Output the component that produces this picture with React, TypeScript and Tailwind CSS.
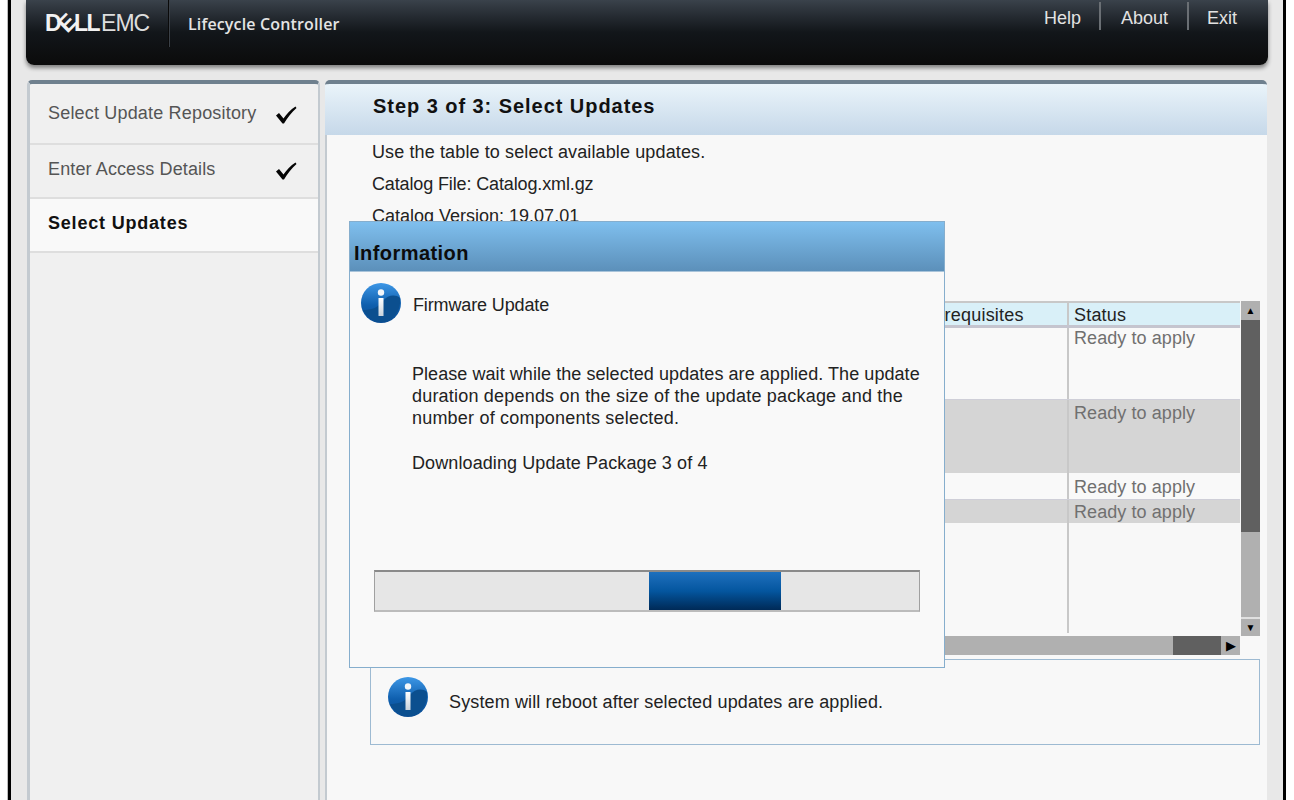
import { useId } from 'react';

const sans = "font-['Liberation_Sans',Arial,sans-serif]";

function InfoIcon({ className }: { className: string }) {
  const id = useId();
  return (
    <svg viewBox="0 0 40 40" className={className}>
      <defs>
        <linearGradient id={`${id}-b`} x1="0" y1="0" x2="0" y2="1">
          <stop offset="0" stopColor="#3d97e6" />
          <stop offset="0.55" stopColor="#0f5fae" />
          <stop offset="1" stopColor="#0a4c92" />
        </linearGradient>
        <linearGradient id={`${id}-i`} x1="0" y1="0" x2="0" y2="1">
          <stop offset="0" stopColor="#ffffff" />
          <stop offset="1" stopColor="#c9d3dc" />
        </linearGradient>
      </defs>
      <circle cx="20" cy="20" r="20" fill={`url(#${id}-b)`} />
      <path d="M2 27C10 27 17 25 22 18C27 12 34 11 39 15C40 24 36 33 27 38C18 41 7 37 2 27Z" fill="#0b4f8f" />
      <circle cx="20" cy="9.5" r="3.2" fill="#f4f7fa" />
      <rect x="17.5" y="15" width="5" height="18" fill={`url(#${id}-i)`} />
    </svg>
  );
}

function CheckMark() {
  return (
    <svg viewBox="0 0 22 18" className="h-[18px] w-[22px]">
      <path d="M1 9.5L4 7L8.5 12.5C11.5 8 15.5 3.5 20.5 0.5L21.5 2C16.5 6.5 12.5 11.5 9 17.5L7.5 17.5Z" fill="#050505" />
    </svg>
  );
}

function NavItem({ label, size, tracking, done, active }: { label: string; size: string; tracking: string; done?: boolean; active?: boolean }) {
  return (
    <div
      className={`flex shrink-0 items-center justify-between border-b-2 border-[#dedede] pl-[18px] pr-[21px] text-[18px] ${size} ${tracking} ${
        active ? 'bg-[#f9f9f9] font-bold text-[#111111]' : 'text-[#555555]'
      }`}
    >
      <span className="-mt-[4px]">{label}</span>
      {done && <CheckMark />}
    </div>
  );
}

function Row({ height, offset, grey }: { height: string; offset: string; grey?: boolean }) {
  return (
    <div className={`flex shrink-0 ${height} ${grey ? 'bg-[#d5d5d5]' : 'border-b border-[#cfcfd8] bg-[#f9f9f9]'}`}>
      <div className="flex-1" />
      <div className={`w-[173px] border-l-2 border-[#c8c8c8] pl-[5px] text-[18px] leading-[20px] tracking-[0.08px] text-[#707070] ${offset}`}>
        Ready to apply
      </div>
    </div>
  );
}

function VerticalScrollbar() {
  return (
    <div className="ml-px flex w-[19px] flex-col bg-[#b0b0b0]">
      <div className="flex h-[19px] items-center justify-center text-[10px] leading-none text-black">▲</div>
      <div className="h-[212px] bg-[#606060]" />
      <div className="flex-1" />
      <div className="flex h-[19px] items-center justify-center border-t-2 border-[#e0e0e0] text-[10px] leading-none text-black">▼</div>
    </div>
  );
}

function Table() {
  return (
    <div className="ml-[43px] mt-[69px] flex w-[890px]">
      <div className="flex h-[354px] flex-1 flex-col">
        <div className="flex h-[334px] flex-col border-t-2 border-[#c8c8c8]">
          <div className="flex h-[25px] shrink-0 border-b-[3px] border-[#c5c5cf] bg-[#d9f0f8] text-[18px] leading-[24px] tracking-[0.2px] text-[#222222]">
            <div className="flex-1 pl-[546px]">Prerequisites</div>
            <div className="w-[173px] border-l-2 border-[#c8c8c8] pl-[5px]">Status</div>
          </div>
          <Row height="h-[72px]" offset="pt-0" />
          <Row height="h-[73px]" offset="pt-[3px]" grey />
          <Row height="h-[27px]" offset="pt-[4px]" />
          <Row height="h-[23px]" offset="pt-[2px]" grey />
          <div className="flex flex-1">
            <div className="flex-1" />
            <div className="mb-[2px] w-[173px] border-l-2 border-[#c8c8c8]" />
          </div>
        </div>
        <div className="mt-px flex h-[19px] bg-[#b0b0b0]">
          <div className="flex-1" />
          <div className="w-[48px] bg-[#606060]" />
          <div className="flex w-[19px] items-center justify-center text-[13px] leading-none text-black">▶</div>
        </div>
      </div>
      <div className="flex h-[335px] self-start">
        <VerticalScrollbar />
      </div>
    </div>
  );
}

function Dialog() {
  return (
    <div className="absolute left-[349px] top-[221px] h-[447px] w-[596px] border border-[#86aecd] bg-[#f9f9f9]">
      <div className="flex h-[50px] items-end border-b border-[#a9c4da] bg-gradient-to-b from-[#7fbfee] to-[#5c90ba] pb-[5px] pl-[4px] text-[20px] font-bold leading-[26px] tracking-[0.45px] text-[#0c0c0c]">
        Information
      </div>
      <div className="flex items-center pl-[11px] pt-[11px]">
        <InfoIcon className="h-[40px] w-[40px]" />
        <span className="ml-[12px] mt-[5px] text-[18px] tracking-[-0.13px] text-[#222222]">Firmware Update</span>
      </div>
      <div className="ml-[62px] mt-[40px] text-[18px] leading-[22px] tracking-[0.2px] text-[#222222]">
        <p className="tracking-[0.06px]">Please wait while the selected updates are applied. The update</p>
        <p>duration depends on the size of the update package and the</p>
        <p>number of components selected.</p>
        <p className="mt-[23px] tracking-[0.1px]">Downloading Update Package 3 of 4</p>
      </div>
      <div className="ml-[24px] mt-[96px] h-[42px] w-[546px] border-x border-b-2 border-t-2 border-x-[#a0a0a0] border-b-[#bcbcbc] border-t-[#8a8a8a] bg-[#e6e6e6] pl-[274px]">
        <div className="h-full w-[132px] bg-gradient-to-b from-[#1d70be] via-[#04569f] to-[#002a57]" />
      </div>
    </div>
  );
}

export default function App() {
  return (
    <div className={`${sans} relative h-[800px] w-[1294px] overflow-hidden bg-white`}>
      <div className="ml-[7px] h-full w-[1279px] border-l border-[#bdbdbd]">
        <div className="h-full border-x-[3px] border-black bg-[#e8e8e8] pl-[15px] pr-[15px]">
          <header className="flex h-[65px] w-[1242px] items-start justify-between rounded-b-[8px] bg-gradient-to-b from-[#3a424b] via-[#12161a] to-[#0b0b0b] shadow-[0_3px_4px_rgba(0,0,0,0.45)]">
            <div className="flex h-[47px] items-center">
              <div className="ml-[19px] flex w-[123px] items-center text-[23px] leading-none text-[#f2f2f2]">
                <span className="font-bold tracking-[-1.5px]">D</span>
                <span className="inline-block -rotate-45 font-bold tracking-[-1.5px]">E</span>
                <span className="font-bold tracking-[-1.5px]">LL</span>
                <span className="ml-[2px] font-light tracking-[-1px] text-[#dddddd]">EMC</span>
              </div>
              <div className="h-[47px] w-px bg-[#0a0a0a] shadow-[1px_0_0_#3a4047]" />
              <span className="ml-[19px] font-['Open_Sans',sans-serif] text-[16px] font-semibold tracking-[0.15px] text-[#e4e4e4]">
                Lifecycle Controller
              </span>
            </div>
            <nav className="flex h-[30px] items-center pr-[31px] pt-[2px] text-[18px] text-[#e2e2e2]">
              <span className="mt-[5px]">Help</span>
              <span className="ml-[18px] mr-[20px] h-[28px] w-[2px] bg-[#6a6f74]" />
              <span className="mt-[5px]">About</span>
              <span className="ml-[19px] mr-[18px] h-[28px] w-[2px] bg-[#6a6f74]" />
              <span className="mt-[5px]">Exit</span>
            </nav>
          </header>
          <div className="mt-[15px] flex h-[720px] w-[1241px] gap-[5px] pl-px">
            <aside className="flex h-full w-[293px] flex-col rounded-t-[5px] border-l-[3px] border-r-2 border-t-[4px] border-[#c3cad0] border-t-[#6f808e] bg-[#f0f0f0] pt-[3px]">
              <NavItem label="Select Update Repository" size="h-[58px]" tracking="tracking-[0.18px]" done />
              <NavItem label="Enter Access Details" size="h-[54px]" tracking="tracking-[0.12px]" done />
              <NavItem label="Select Updates" size="h-[54px]" tracking="tracking-[0.8px]" active />
            </aside>
            <main className="flex h-full w-[942px] flex-col">
              <div className="flex h-[55px] shrink-0 items-center rounded-t-[5px] border-t-[4px] border-[#6f808e] bg-gradient-to-b from-[#eaf4fa] to-[#c6d8e9] pl-[48px] text-[20px] font-bold tracking-[0.95px] text-[#111111]">
                <span className="-mt-[8px]">Step 3 of 3: Select Updates</span>
              </div>
              <div className="flex-1 border-l-2 border-[#c3cad0] bg-[#f8f8f8]">
                <div className="pl-[45px] pt-px text-[18px] leading-[32px] text-[#222222]">
                  <p className="tracking-[0.12px]">Use the table to select available updates.</p>
                  <p className="tracking-[-0.13px]">Catalog File: Catalog.xml.gz</p>
                  <p>Catalog Version: 19.07.01</p>
                </div>
                <Table />
                <div className="ml-[43px] mt-[4px] flex h-[86px] w-[890px] items-start border border-[#9dbad2] pl-[17px] pt-[17px]">
                  <InfoIcon className="h-[40px] w-[40px]" />
                  <span className="ml-[21px] mt-[12px] text-[18px] tracking-[0.13px] text-[#222222]">
                    System will reboot after selected updates are applied.
                  </span>
                </div>
              </div>
            </main>
          </div>
        </div>
      </div>
      <Dialog />
    </div>
  );
}
